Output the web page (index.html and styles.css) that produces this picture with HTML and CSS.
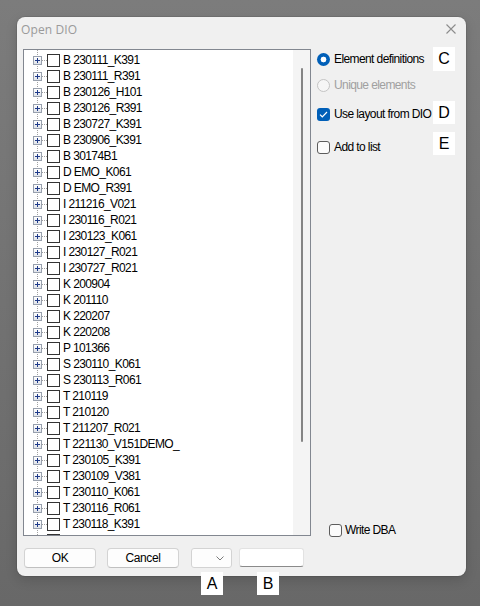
FILE: index.html
```html
<!DOCTYPE html>
<html lang="en">
<head>
    <meta charset="UTF-8">
    <title>Open DIO</title>
    <link rel="stylesheet" href="styles.css">
</head>
<body>
    <div class="desktop">
        <div class="window">
            <div class="titlebar">
                <span class="title">Open DIO</span>
                <svg class="close" width="10" height="10" viewBox="0 0 10 10">
                    <path d="M0.5 0.5 L9.5 9.5 M9.5 0.5 L0.5 9.5" stroke="#8c8c8c" stroke-width="1.1" fill="none"/>
                </svg>
            </div>

            <div class="content">
                <div class="main">
                    <div class="tree">
                        <ul class="tree-list">
                            <li class="node"><span class="expander"></span><span class="branch"></span><span class="box"></span><span class="label">B 230111_K391</span></li>
                            <li class="node"><span class="expander"></span><span class="branch"></span><span class="box"></span><span class="label">B 230111_R391</span></li>
                            <li class="node"><span class="expander"></span><span class="branch"></span><span class="box"></span><span class="label">B 230126_H101</span></li>
                            <li class="node"><span class="expander"></span><span class="branch"></span><span class="box"></span><span class="label">B 230126_R391</span></li>
                            <li class="node"><span class="expander"></span><span class="branch"></span><span class="box"></span><span class="label">B 230727_K391</span></li>
                            <li class="node"><span class="expander"></span><span class="branch"></span><span class="box"></span><span class="label">B 230906_K391</span></li>
                            <li class="node"><span class="expander"></span><span class="branch"></span><span class="box"></span><span class="label">B 30174B1</span></li>
                            <li class="node"><span class="expander"></span><span class="branch"></span><span class="box"></span><span class="label">D EMO_K061</span></li>
                            <li class="node"><span class="expander"></span><span class="branch"></span><span class="box"></span><span class="label">D EMO_R391</span></li>
                            <li class="node"><span class="expander"></span><span class="branch"></span><span class="box"></span><span class="label">I 211216_V021</span></li>
                            <li class="node"><span class="expander"></span><span class="branch"></span><span class="box"></span><span class="label">I 230116_R021</span></li>
                            <li class="node"><span class="expander"></span><span class="branch"></span><span class="box"></span><span class="label">I 230123_K061</span></li>
                            <li class="node"><span class="expander"></span><span class="branch"></span><span class="box"></span><span class="label">I 230127_R021</span></li>
                            <li class="node"><span class="expander"></span><span class="branch"></span><span class="box"></span><span class="label">I 230727_R021</span></li>
                            <li class="node"><span class="expander"></span><span class="branch"></span><span class="box"></span><span class="label">K 200904</span></li>
                            <li class="node"><span class="expander"></span><span class="branch"></span><span class="box"></span><span class="label">K 201110</span></li>
                            <li class="node"><span class="expander"></span><span class="branch"></span><span class="box"></span><span class="label">K 220207</span></li>
                            <li class="node"><span class="expander"></span><span class="branch"></span><span class="box"></span><span class="label">K 220208</span></li>
                            <li class="node"><span class="expander"></span><span class="branch"></span><span class="box"></span><span class="label">P 101366</span></li>
                            <li class="node"><span class="expander"></span><span class="branch"></span><span class="box"></span><span class="label">S 230110_K061</span></li>
                            <li class="node"><span class="expander"></span><span class="branch"></span><span class="box"></span><span class="label">S 230113_R061</span></li>
                            <li class="node"><span class="expander"></span><span class="branch"></span><span class="box"></span><span class="label">T 210119</span></li>
                            <li class="node"><span class="expander"></span><span class="branch"></span><span class="box"></span><span class="label">T 210120</span></li>
                            <li class="node"><span class="expander"></span><span class="branch"></span><span class="box"></span><span class="label">T 211207_R021</span></li>
                            <li class="node"><span class="expander"></span><span class="branch"></span><span class="box"></span><span class="label">T 221130_V151DEMO_</span></li>
                            <li class="node"><span class="expander"></span><span class="branch"></span><span class="box"></span><span class="label">T 230105_K391</span></li>
                            <li class="node"><span class="expander"></span><span class="branch"></span><span class="box"></span><span class="label">T 230109_V381</span></li>
                            <li class="node"><span class="expander"></span><span class="branch"></span><span class="box"></span><span class="label">T 230110_K061</span></li>
                            <li class="node"><span class="expander"></span><span class="branch"></span><span class="box"></span><span class="label">T 230116_R061</span></li>
                            <li class="node"><span class="expander"></span><span class="branch"></span><span class="box"></span><span class="label">T 230118_K391</span></li>
                            <li class="node"><span class="expander"></span><span class="branch"></span><span class="box"></span><span class="label">T 230119_V151</span></li>
                        </ul>
                        <div class="scrollbar">
                            <div class="scroll-thumb"></div>
                        </div>
                    </div>

                    <div class="options">
                        <label class="option opt-first">
                            <span class="radio checked"></span>
                            <span>Element definitions</span>
                        </label>
                        <label class="option opt-second disabled">
                            <span class="radio"></span>
                            <span>Unique elements</span>
                        </label>
                        <label class="option opt-third">
                            <span class="check checked">
                                <svg width="9" height="7" viewBox="0 0 9 7"><path d="M1 3.6 L3.3 5.8 L8 1" stroke="#fff" stroke-width="1.2" fill="none"/></svg>
                            </span>
                            <span>Use layout from DIO</span>
                        </label>
                        <label class="option opt-fourth">
                            <span class="check"></span>
                            <span>Add to list</span>
                        </label>

                        <label class="option write-dba">
                            <span class="check"></span>
                            <span>Write DBA</span>
                        </label>
                    </div>
                </div>

                <div class="footer">
                    <button class="btn btn-ok">OK</button>
                    <button class="btn btn-cancel">Cancel</button>
                    <div class="combo">
                        <svg width="8" height="5" viewBox="0 0 8 5"><path d="M0.5 0.5 L4 4 L7.5 0.5" stroke="#7a7a7a" stroke-width="1" fill="none"/></svg>
                    </div>
                    <div class="edit"></div>
                </div>
            </div>
        </div>

        <!-- callout letters -->
        <span class="callout callout-c">C</span>
        <span class="callout callout-d">D</span>
        <span class="callout callout-e">E</span>
        <span class="callout callout-a">A</span>
        <span class="callout callout-b">B</span>
    </div>
</body>
</html>
```

FILE: styles.css
```css
html, body {
    margin: 0;
    padding: 0;
}

body {
    width: 480px;
    height: 606px;
    overflow: hidden;
    font-family: 'Liberation Sans', Arial, sans-serif;
    font-size: 12px;
    color: #000;
}

.desktop {
    position: relative;
    width: 480px;
    height: 606px;
    padding: 17px 0 0 17px;
    box-sizing: border-box;
    background: linear-gradient(180deg, #7c7c7c 0%, #707070 60%, #686868 100%);
}

.window {
    width: 449px;
    height: 559px;
    background: #f0f0f0;
    border-radius: 8px;
    box-shadow: 0 0 0 1px rgba(0, 0, 0, 0.08), 0 4px 12px rgba(0, 0, 0, 0.15);
    overflow: hidden;
}

.titlebar {
    height: 24px;
    display: flex;
    align-items: center;
    justify-content: space-between;
    padding: 0 10px 0 4px;
}

.title {
    font-family: 'Open Sans', 'Noto Sans', sans-serif;
    font-size: 12px;
    color: #9a9a9a;
    letter-spacing: 0.1px;
}

.content {
    padding: 8px 0 0 6px;
}

.main {
    display: flex;
    gap: 6px;
    height: 487px;
}

/* tree view */
.tree {
    width: 288px;
    height: 487px;
    box-sizing: border-box;
    border: 1px solid #828790;
    background: #fff;
    display: flex;
}

.tree-list {
    flex: 1;
    list-style: none;
    margin: 0;
    padding: 2px 0 0 0;
    overflow: hidden;
    background-image: linear-gradient(to bottom, #a0a0a0 50%, transparent 50%);
    background-size: 1px 2px;
    background-repeat: repeat-y;
    background-position: 13px 0;
}

.node {
    display: flex;
    align-items: center;
    height: 16px;
    padding-left: 9px;
    white-space: nowrap;
}

.expander {
    width: 9px;
    height: 9px;
    box-sizing: border-box;
    border: 1px solid #98a0ad;
    background:
        linear-gradient(#1e3a8a, #1e3a8a) center / 5px 1px no-repeat,
        linear-gradient(#1e3a8a, #1e3a8a) center / 1px 5px no-repeat,
        linear-gradient(180deg, #ffffff 0%, #dfe3ea 100%);
    flex-shrink: 0;
}

.branch {
    width: 5px;
    height: 1px;
    background-image: linear-gradient(to right, #a0a0a0 50%, transparent 50%);
    background-size: 2px 1px;
    flex-shrink: 0;
}

.box {
    width: 13px;
    height: 13px;
    box-sizing: border-box;
    border: 1px solid #333;
    background: #fff;
    flex-shrink: 0;
}

.label {
    margin-left: 3px;
    letter-spacing: -0.6px;
    line-height: 16px;
}

.scrollbar {
    width: 17px;
    background: #f4f4f4;
    display: flex;
    justify-content: center;
    padding-top: 18px;
    box-sizing: border-box;
}

.scroll-thumb {
    width: 2px;
    height: 374px;
    background: #858585;
    border-radius: 1px;
}

/* right-hand options */
.options {
    flex: 1;
    display: flex;
    flex-direction: column;
    padding-top: 2px;
}

.option {
    display: flex;
    align-items: center;
    gap: 4px;
    height: 16px;
    letter-spacing: -0.6px;
}

.opt-second {
    margin-top: 10px;
}

.opt-third {
    margin-top: 13px;
}

.opt-fourth {
    margin-top: 17px;
}

.option.disabled {
    color: #a0a0a0;
}

.radio {
    width: 13px;
    height: 13px;
    box-sizing: border-box;
    border-radius: 50%;
    border: 1px solid #c4c4c4;
    background: #f6f6f6;
    flex-shrink: 0;
}

.radio.checked {
    border: none;
    background: radial-gradient(circle, #ffffff 0, #ffffff 2.6px, #005fb8 3.2px);
}

.check {
    width: 13px;
    height: 13px;
    box-sizing: border-box;
    border: 1px solid #5c5c5c;
    border-radius: 3px;
    background: #fbfbfb;
    flex-shrink: 0;
    display: flex;
    align-items: center;
    justify-content: center;
}

.check.checked {
    border: none;
    background: #005fb8;
}

.write-dba {
    margin-top: auto;
    margin-bottom: -2px;
    margin-left: 12px;
    gap: 3px;
}

/* button row */
.footer {
    display: flex;
    align-items: center;
    margin-top: 12px;
    padding-left: 1px;
}

.btn {
    height: 20px;
    width: 72px;
    box-sizing: border-box;
    padding: 0;
    background: #fdfdfd;
    border: 1px solid #d3d3d3;
    border-bottom-color: #c0c0c0;
    border-radius: 4px;
    font-family: 'Liberation Sans', Arial, sans-serif;
    font-size: 12px;
    letter-spacing: -0.4px;
    color: #000;
}

.btn-cancel {
    margin-left: 11px;
}

.combo {
    width: 41px;
    height: 20px;
    box-sizing: border-box;
    margin-left: 12px;
    background: #fdfdfd;
    border: 1px solid #d3d3d3;
    border-radius: 3px;
    display: flex;
    align-items: center;
    justify-content: flex-end;
    padding-right: 7px;
}

.edit {
    width: 65px;
    height: 19px;
    box-sizing: border-box;
    margin-left: 7px;
    margin-top: -1px;
    background: #fff;
    border: 1px solid #e2e2e2;
    border-bottom-color: #8a8a8a;
    border-radius: 3px;
}

/* white letter tags placed over the dialog */
.callout {
    position: absolute;
    width: 22px;
    height: 23px;
    background: #fff;
    font-family: 'Liberation Sans', Arial, sans-serif;
    font-size: 16px;
    line-height: 23px;
    text-align: center;
    color: #000;
}

.callout-c { left: 433px; top: 47px; height: 24px; }
.callout-d { left: 433px; top: 101px; }
.callout-e { left: 433px; top: 132px; }
.callout-a { left: 201px; top: 572px; }
.callout-b { left: 257px; top: 572px; }
```
